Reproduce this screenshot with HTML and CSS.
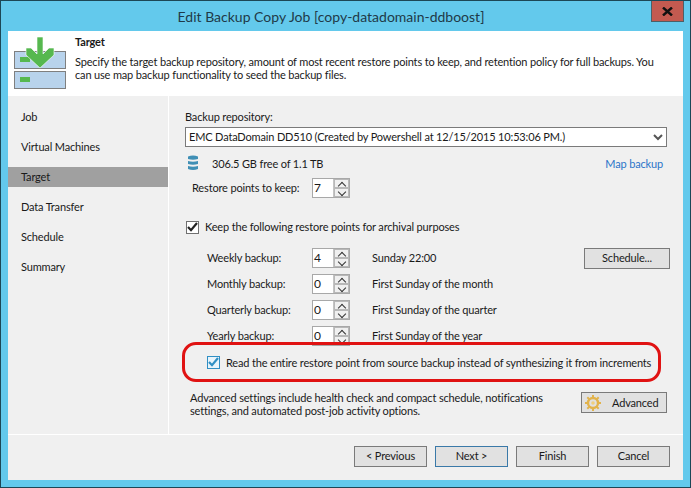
FILE: index.html
```html
<!DOCTYPE html>
<html lang="en">
<head>
<meta charset="utf-8">
<title>Edit Backup Copy Job</title>
<link rel="stylesheet" href="styles.css">
</head>
<body>
<div class="window">
  <div class="titlebar">
    <span class="title">Edit Backup Copy Job [copy-datadomain-ddboost]</span>
    <div class="close"><svg width="11" height="9" viewBox="0 0 11 9"><path d="M1 0.5 L10 8.5 M10 0.5 L1 8.5" stroke="#111" stroke-width="2.4" fill="none"/></svg></div>
  </div>
  <div class="client">
    <header class="header">
      <svg class="header-icon" width="54" height="54" viewBox="0 0 54 54">
        <rect x="0.5" y="15.5" width="51" height="17" fill="#b8d3ec" stroke="#7f7f7f"/>
        <rect x="0.5" y="35.5" width="51" height="17" fill="#b8d3ec" stroke="#7f7f7f"/>
        <rect x="6" y="21" width="10" height="5" fill="#56b84f"/>
        <rect x="6" y="41" width="10" height="5" fill="#56b84f"/>
        <path d="M23 1 H29 V18 L35 12 H40 V19 L26 32 L12 19 V12 H17 L23 18 Z" fill="#56b84f" stroke="#fff" stroke-width="0.6"/>
      </svg>
      <div class="header-text">
        <div class="header-title">Target</div>
        <p class="header-desc">Specify the target backup repository, amount of most recent restore points to keep, and retention policy for full backups. You can use map backup functionality to seed the backup files.</p>
      </div>
    </header>
    <div class="middle">
      <nav class="sidebar">
        <div class="nav-item">Job</div>
        <div class="nav-item">Virtual Machines</div>
        <div class="nav-item active">Target</div>
        <div class="nav-item">Data Transfer</div>
        <div class="nav-item">Schedule</div>
        <div class="nav-item">Summary</div>
      </nav>
      <main class="panel">
        <div class="repo-label">Backup repository:</div>
        <div class="combo">
          <span class="combo-text">EMC DataDomain DD510 (Created by Powershell at 12/15/2015 10:53:06 PM.)</span>
          <svg width="10" height="7" viewBox="0 0 10 7"><path d="M1 1 L5 5 L9 1" stroke="#555" stroke-width="2" fill="none"/></svg>
        </div>
        <div class="storage">
          <svg class="db" width="12" height="16" viewBox="0 0 12 16"><path d="M1 1.5 Q6 -0.5 11 1.5 V4 Q6 5.5 1 4 Z M1 6 Q6 7.5 11 6 V9 Q6 10.5 1 9 Z M1 11 Q6 12.5 11 11 V14 Q6 15.8 1 14 Z" fill="#3f8fb5"/></svg>
          <span class="free">306.5 GB free of 1.1 TB</span>
          <a class="link">Map backup</a>
        </div>
        <div class="restore">
          <span class="restore-label">Restore points to keep:</span>
          <div class="spin"><span class="spin-val">7</span><div class="spin-btns"><i class="up"></i><i class="down"></i></div></div>
        </div>
        <label class="check-row keep">
          <span class="check"><svg width="11" height="10" viewBox="0 0 11 10"><path d="M1 5 L4 8.2 L10 1" stroke="#222" stroke-width="2.2" fill="none"/></svg></span>
          <span class="check-text">Keep the following restore points for archival purposes</span>
        </label>
        <div class="schedule-grid">
          <span class="g-label">Weekly backup:</span>
          <div class="spin"><span class="spin-val">4</span><div class="spin-btns"><i class="up"></i><i class="down"></i></div></div>
          <span class="g-text">Sunday 22:00</span>
          <button class="btn schedule-btn">Schedule...</button>
          <span class="g-label">Monthly backup:</span>
          <div class="spin"><span class="spin-val">0</span><div class="spin-btns"><i class="up"></i><i class="down"></i></div></div>
          <span class="g-text">First Sunday of the month</span>
          <span></span>
          <span class="g-label">Quarterly backup:</span>
          <div class="spin"><span class="spin-val">0</span><div class="spin-btns"><i class="up"></i><i class="down"></i></div></div>
          <span class="g-text">First Sunday of the quarter</span>
          <span></span>
          <span class="g-label">Yearly backup:</span>
          <div class="spin"><span class="spin-val">0</span><div class="spin-btns"><i class="up"></i><i class="down"></i></div></div>
          <span class="g-text">First Sunday of the year</span>
          <span></span>
        </div>
        <label class="check-row read">
          <span class="check blue"><svg width="11" height="10" viewBox="0 0 11 10"><path d="M1 5 L4 8.2 L10 1" stroke="#2f8fc4" stroke-width="2.2" fill="none"/></svg></span>
          <span class="nowrap">Read the entire restore point from source backup instead of synthesizing it from increments</span>
        </label>
        <div class="advanced">
          <p class="adv-text">Advanced settings include health check and compact schedule, notifications settings, and automated post-job activity options.</p>
          <button class="btn adv-btn">
            <svg width="16" height="16" viewBox="0 0 16 16"><circle cx="8" cy="8" r="5" fill="none" stroke="#e2b34c" stroke-width="2.4"/><circle cx="8" cy="8" r="1.8" fill="#f0cf7e"/><path d="M8 0 V3 M8 13 V16 M0 8 H3 M13 8 H16 M2.3 2.3 L4.4 4.4 M11.6 11.6 L13.7 13.7 M13.7 2.3 L11.6 4.4 M4.4 11.6 L2.3 13.7" stroke="#e2b34c" stroke-width="2"/></svg>
            <span>Advanced</span>
          </button>
        </div>
        <div class="highlight"></div>
      </main>
    </div>
    <footer class="footer">
      <button class="btn foot-btn">&lt; Previous</button>
      <button class="btn foot-btn default">Next &gt;</button>
      <button class="btn foot-btn">Finish</button>
      <button class="btn foot-btn">Cancel</button>
    </footer>
  </div>
</div>
</body>
</html>
```
FILE: styles.css
```css
* { box-sizing: border-box; }
html, body { margin: 0; padding: 0; }
body { width: 691px; height: 488px; overflow: hidden; font-family: "Lato", "Liberation Sans", sans-serif; font-size: 11px; letter-spacing: -0.16px; color: #1a1a1a; }
.window { position: relative; width: 691px; height: 488px; background: #63c9ec; border: 1px solid #1c4756; display: flex; flex-direction: column; }
.titlebar { height: 30px; flex: none; display: flex; align-items: center; justify-content: center; padding-top: 1px; padding-right: 29px; }
.title { font-size: 14px; letter-spacing: 0; color: #1f3a48; }
.close { position: absolute; top: 0; right: 6px; width: 33px; height: 21px; background: #c35a50; border: 1px solid #4d5f66; border-top: none; display: flex; align-items: center; justify-content: center; }
.client { margin: 0 7px 7px 7px; flex: 1; background: #f0f0f0; display: flex; flex-direction: column; width: 675px; }
.header { height: 65px; flex: none; background: #fff; display: flex; padding: 4px 12px 0 6px; }
.header-icon { flex: none; width: 54px; height: 54px; margin-top: 1px; }
.header-text { margin-left: 7px; }
.header-title { font-weight: 700; line-height: 14px; }
.header-desc { margin: 6px 0 0; line-height: 13px; }
.middle { height: 338px; flex: none; display: flex; }
.sidebar { width: 161px; flex: none; border-right: 1px solid #fff; padding-top: 11px; }
.nav-item { height: 20px; line-height: 20px; padding-left: 13px; margin-bottom: 10px; }
.nav-item.active { background: #a0a0a0; }
.panel { position: relative; flex: 1; min-width: 0; padding: 13px 16px 0 16px; }
.repo-label { height: 15px; line-height: 15px; }
.combo { margin-top: 3px; height: 20px; background: #fff; border: 1px solid #7a7a7a; display: flex; align-items: center; justify-content: space-between; padding: 0 3px 0 3px; }
.combo-text { padding-bottom: 2px; }
.storage { margin-top: 8px; height: 16px; display: flex; align-items: center; }
.db { margin-left: 2px; flex: none; }
.free { margin-left: 13px; }
.link { margin-left: auto; margin-right: 4px; color: #2a74c9; }
.restore { margin-top: 7px; height: 20px; display: flex; align-items: center; padding-left: 7px; }
.restore-label { width: 120px; padding-bottom: 2px; }
.spin { width: 38px; height: 20px; background: #fff; border: 1px solid #a8a8a8; display: flex; align-items: stretch; }
.spin-val { flex: 1; padding-left: 1px; line-height: 17px; font-size: 12px; }
.spin-btns { width: 16px; flex: none; background: #fff; border-left: 1px solid #c4c4c4; display: flex; flex-direction: column; position: relative; }
.spin-btns i { flex: 1; display: block; position: relative; background: #f0f0f0; border: 1px solid #b8b8b8; }
.spin-btns i::after { content: ""; position: absolute; left: 4px; width: 5px; height: 5px; border-left: 1px solid #333; border-top: 1px solid #333; }
.spin-btns .up::after { top: 2.5px; transform: rotate(45deg); }
.spin-btns .down::after { top: -0.5px; transform: rotate(225deg); }
.check-row { display: flex; align-items: center; height: 16px; }
.check { width: 13px; height: 13px; background: #fff; border: 1px solid #707070; display: flex; align-items: center; justify-content: center; flex: none; margin-right: 6px; }
.check.blue { border-color: #2f8fc4; background: #e8f4fb; }
.check-text { padding-bottom: 2px; }
.nowrap { white-space: nowrap; }
.keep { margin-top: 21px; padding-left: 1px; }
.schedule-grid { margin-top: 13px; padding-left: 22px; display: grid; grid-template-columns: 105px 38px 1fr auto; grid-auto-rows: 20px; row-gap: 6px; align-items: center; }
.g-label { padding-bottom: 2px; }
.g-text { padding-left: 22px; padding-bottom: 2px; }
.btn { font: inherit; letter-spacing: inherit; color: inherit; background: #e1e1e1; border: 1px solid #7a7a7a; padding: 0 0 2px; }
.schedule-btn { width: 86px; height: 21px; margin-right: -3px; margin-top: 1px; }
.read { margin-top: 8px; padding-left: 22px; }
.advanced { margin-top: 20px; padding-left: 5px; display: flex; align-items: flex-start; justify-content: space-between; }
.adv-text { margin: 1px 0 0; width: 375px; line-height: 13px; }
.adv-btn { width: 86px; height: 21px; display: flex; align-items: center; padding: 0 0 0 3px; margin-top: 2px; gap: 11px; }
.highlight { position: absolute; left: 13px; top: 246px; width: 479px; height: 40px; border: 3px solid #e01212; border-radius: 14px; pointer-events: none; }
.footer { flex: 1; border-top: 1px solid #fff; display: flex; justify-content: flex-end; gap: 8px; padding: 11px 13px 0 0; }
.foot-btn { width: 73px; height: 21px; }
.foot-btn.default { border-color: #3a79a8; }
```
